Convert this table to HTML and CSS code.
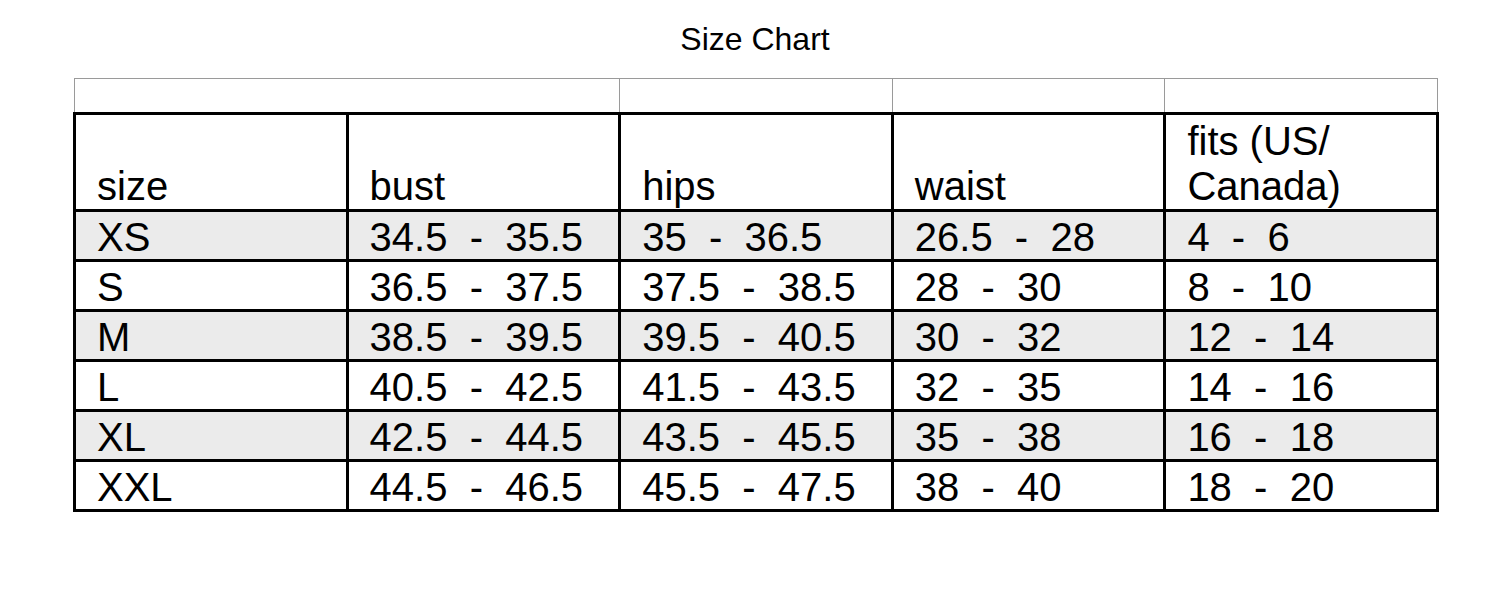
FILE: index.html
```html
<!DOCTYPE html>
<html>
<head>
<meta charset="utf-8">
<title>Size Chart</title>
<link rel="stylesheet" href="styles.css">
</head>
<body>
<div class="page">
  <h1 class="title">Size Chart</h1>
  <table class="chart">
    <colgroup>
      <col class="c"><col class="c"><col class="c"><col class="c"><col class="c">
    </colgroup>
    <tr class="spacer">
      <td colspan="2"></td><td></td><td></td><td></td>
    </tr>
    <tr class="head">
      <td>size</td><td>bust</td><td>hips</td><td>waist</td><td>fits (US/<br>Canada)</td>
    </tr>
    <tr class="row alt">
      <td>XS</td><td>34.5  -  35.5</td><td>35  -  36.5</td><td>26.5  -  28</td><td>4  -  6</td>
    </tr>
    <tr class="row">
      <td>S</td><td>36.5  -  37.5</td><td>37.5  -  38.5</td><td>28  -  30</td><td>8  -  10</td>
    </tr>
    <tr class="row alt">
      <td>M</td><td>38.5  -  39.5</td><td>39.5  -  40.5</td><td>30  -  32</td><td>12  -  14</td>
    </tr>
    <tr class="row">
      <td>L</td><td>40.5  -  42.5</td><td>41.5  -  43.5</td><td>32  -  35</td><td>14  -  16</td>
    </tr>
    <tr class="row alt">
      <td>XL</td><td>42.5  -  44.5</td><td>43.5  -  45.5</td><td>35  -  38</td><td>16  -  18</td>
    </tr>
    <tr class="row">
      <td>XXL</td><td>44.5  -  46.5</td><td>45.5  -  47.5</td><td>38  -  40</td><td>18  -  20</td>
    </tr>
  </table>
</div>
</body>
</html>
```
FILE: styles.css
```css
html, body {
  margin: 0;
  padding: 0;
  background: #ffffff;
}

.page {
  width: 1488px;
  padding-top: 23px;
  font-family: "Liberation Sans", Arial, sans-serif;
  color: #000;
}

.title {
  margin: 0;
  font-size: 32px;
  line-height: 32px;
  font-weight: normal;
  text-align: center;
  padding-left: 22px;
}

.chart {
  margin-top: 23px;
  margin-left: 73px;
  width: 1363px;
  table-layout: fixed;
  border-collapse: collapse;
  border-spacing: 0;
}

.chart .c {
  width: 272.6px;
}

.chart td {
  padding: 0 0 0 21px;
  font-size: 40px;
  white-space: pre;
  vertical-align: top;
}

.spacer td {
  height: 33px;
  border: 1px solid #9a9a9a;
  padding: 0;
}

.head td,
.row td {
  border: 3px solid #000;
}

.head td {
  height: 94px;
  line-height: 45px;
  vertical-align: bottom;
  padding-bottom: 0;
}

.row td {
  height: 47px;
  line-height: 44px;
  padding-top: 3px;
  box-sizing: border-box;
}

.row.alt td {
  background: #ebebeb;
}
```
